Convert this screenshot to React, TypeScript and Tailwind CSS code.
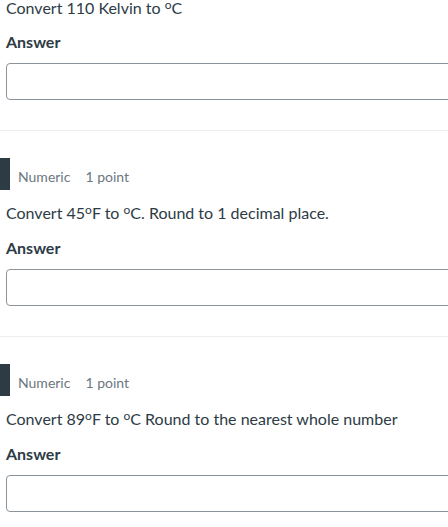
import React from "react";

const Deg = () => (
  <sup className="relative top-[-0.42em] align-baseline text-[0.75em] leading-none">o</sup>
);

function AnswerBlock({ first = false }: { first?: boolean }) {
  return (
    <>
      <div
        className={
          first
            ? "mt-[16px] h-[20px] text-[16px] font-bold leading-[20px]"
            : "mt-[15px] h-[20px] text-[16px] font-bold leading-[20px]"
        }
      >
        Answer
      </div>
      <div className="mt-[11px] h-[37px] w-[470px] rounded-[4px] border border-[#8b949b] bg-white" />
    </>
  );
}

function Header() {
  return (
    <div className="flex h-[32px] items-center">
      <div className="h-full w-[10px] bg-[#2d3b45]" />
      <span className="ml-[8px] mt-[5px] text-[14px] text-[#6b7780]">Numeric</span>
      <span className="ml-[15px] mt-[5px] text-[14px] text-[#6b7780]">1 point</span>
    </div>
  );
}

function Sep() {
  return <div className="mt-[30px] h-px w-full bg-[#eeeeee]" />;
}

export default function App() {
  return (
    <div
      className="h-[527px] w-[448px] overflow-hidden bg-white text-[#2d3b45]"
      style={{ fontFamily: "Lato, 'Noto Sans', sans-serif" }}
    >
      <div className="pl-[6px]">
        <div className="h-[16px] text-[16px] leading-[16px]">
          Convert 110 Kelvin to <Deg />C
        </div>
        <AnswerBlock first />
      </div>
      <Sep />

      <div className="mt-[27px]">
        <Header />
        <div className="pl-[6px]">
          <div className="mt-[13px] h-[20px] text-[16px] leading-[20px]">
            Convert 45<Deg />F to <Deg />C. Round to 1 decimal place.
          </div>
          <AnswerBlock />
        </div>
      </div>
      <Sep />

      <div className="mt-[27px]">
        <Header />
        <div className="pl-[6px]">
          <div className="mt-[13px] h-[20px] text-[16px] leading-[20px]">
            Convert 89<Deg />F to <Deg />C Round to the nearest whole number
          </div>
          <AnswerBlock />
        </div>
      </div>
    </div>
  );
}
